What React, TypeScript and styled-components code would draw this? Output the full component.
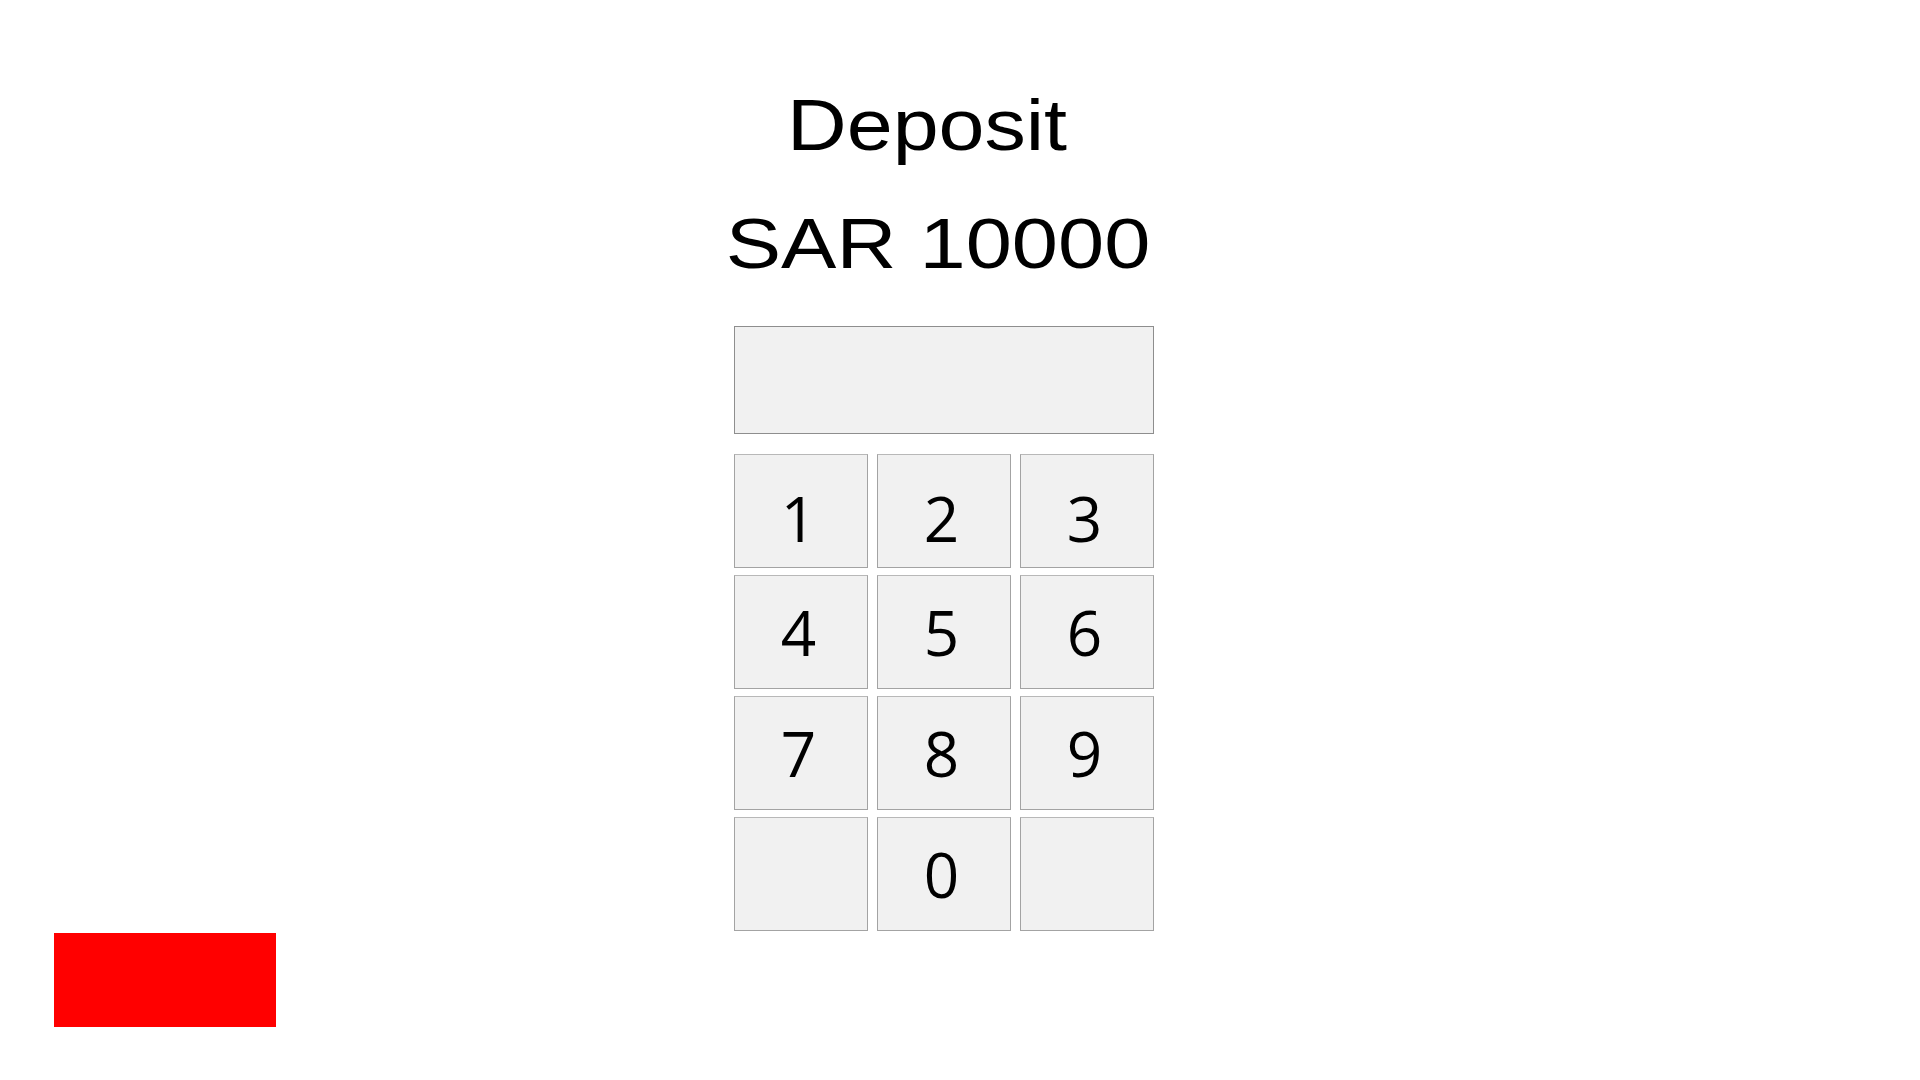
import React from "react";
import styled, { createGlobalStyle } from "styled-components";

const GlobalStyle = createGlobalStyle`
  html, body {
    margin: 0;
    padding: 0;
    background: #ffffff;
  }
  body {
    font-family: "Liberation Sans", Arial, sans-serif;
  }
`;

const Page = styled.div`
  width: 1920px;
  height: 1080px;
  box-sizing: border-box;
  padding-top: 89px;
  display: flex;
  flex-direction: column;
  overflow: hidden;
  background: #ffffff;
`;

const Center = styled.main`
  display: flex;
  flex-direction: column;
  align-items: center;
  padding-right: 32px;
`;

const Heading = styled.h1<{ $size: number; $stretch: number; $shiftLeft: number; $gap: number }>`
  margin: 0 ${(p) => p.$shiftLeft}px ${(p) => p.$gap}px 0;
  font-family: "Liberation Sans", Arial, sans-serif;
  font-weight: 400;
  font-size: ${(p) => p.$size}px;
  line-height: 1;
  color: #000000;
  white-space: nowrap;
  transform: scaleX(${(p) => p.$stretch});
`;

const Display = styled.div`
  width: 420px;
  height: 108px;
  box-sizing: border-box;
  background: #f1f1f1;
  border: 1px solid #8e8e8e;
  margin-bottom: 20px;
`;

const Keypad = styled.div`
  display: grid;
  grid-template-columns: repeat(3, 134px);
  grid-auto-rows: 114px;
  column-gap: 9px;
  row-gap: 7px;
`;

const Key = styled.button<{ $drop: boolean }>`
  display: flex;
  align-items: center;
  justify-content: center;
  box-sizing: border-box;
  padding: ${(p) => (p.$drop ? "14px" : "0")} 5px 0 0;
  margin: 0;
  background: #f1f1f1;
  border: 1px solid #a3a3a3;
  border-top-color: #b8b8b8;
  font-family: "Open Sans", "Noto Sans", sans-serif;
  font-size: 62px;
  font-weight: 400;
  line-height: 1;
  color: #000000;
  cursor: pointer;
`;

const Footer = styled.footer`
  display: flex;
  padding-left: 54px;
  margin-top: 2px;
`;

const CancelButton = styled.button`
  width: 222px;
  height: 94px;
  background: #ff0000;
  border: none;
  padding: 0;
  margin: 0;
  cursor: pointer;
`;

const keys = ["1", "2", "3", "4", "5", "6", "7", "8", "9", "", "0", ""];

export default function App() {
  return (
    <>
      <GlobalStyle />
      <Page>
        <Center>
          <Heading $size={72} $stretch={1.147} $shiftLeft={33} $gap={48}>
            Deposit
          </Heading>
          <Heading $size={70} $stretch={1.186} $shiftLeft={11} $gap={47}>
            SAR 10000
          </Heading>
          <Display />
          <Keypad>
            {keys.map((k, i) => (
              <Key key={i} type="button" $drop={i < 3}>
                {k}
              </Key>
            ))}
          </Keypad>
        </Center>
        <Footer>
          <CancelButton type="button" aria-label="Cancel" />
        </Footer>
      </Page>
    </>
  );
}
